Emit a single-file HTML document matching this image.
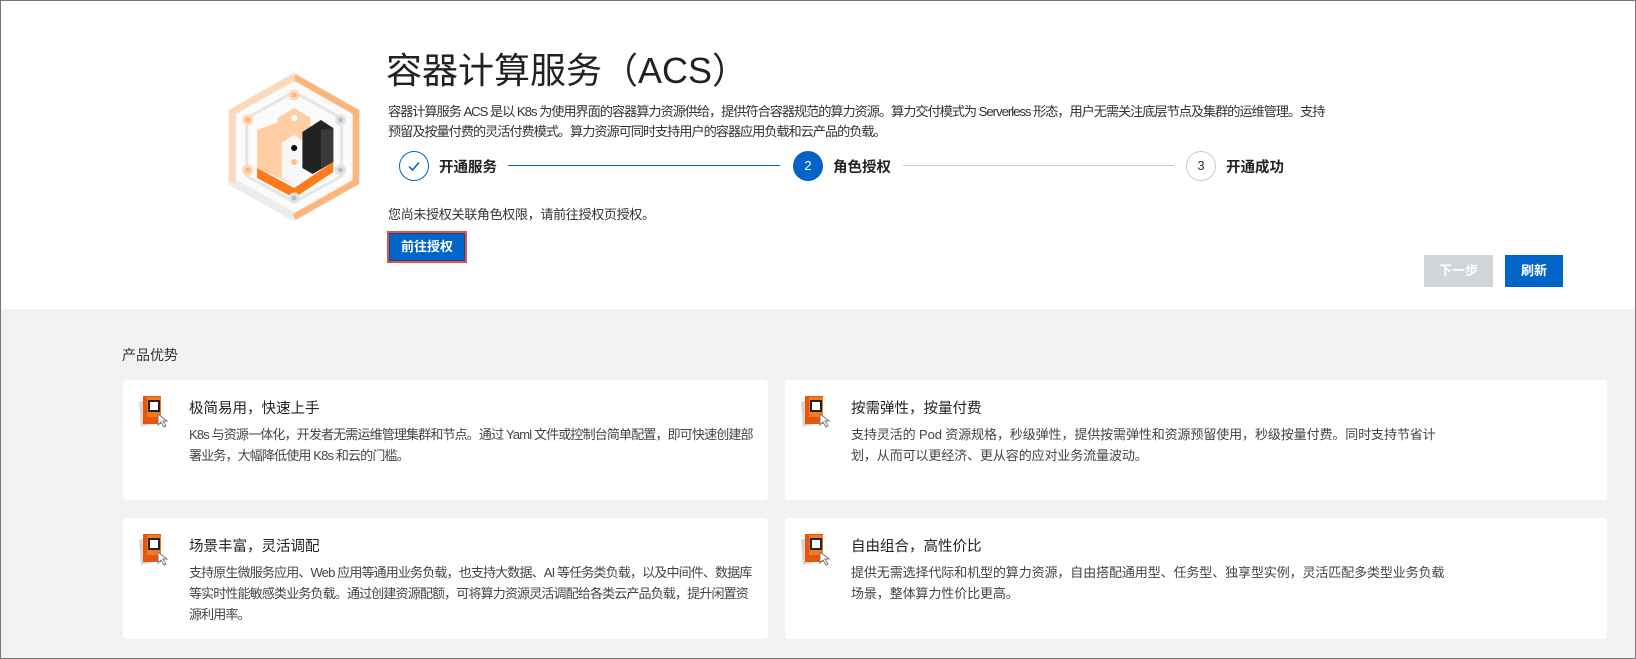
<!DOCTYPE html>
<html><head><meta charset="utf-8"><style>
*{margin:0;padding:0;box-sizing:border-box}
body{width:1636px;height:659px;overflow:hidden;font-family:"Liberation Sans","Noto Sans CJK SC",sans-serif;color:#333;background:#f2f2f2;position:relative}
.frame{position:absolute;inset:0;border:1px solid #777;pointer-events:none;z-index:9}
.top{position:absolute;left:0;top:0;width:1636px;height:309px;background:#fff}
.a{position:absolute;white-space:nowrap}
h1{position:absolute;left:386px;top:42px;font-size:36px;font-weight:400;color:#222;white-space:nowrap}
.desc{position:absolute;left:388px;top:102px;font-size:13.2px;line-height:20px;color:#333;white-space:nowrap;letter-spacing:-1.05px}
.circ{position:absolute;width:30px;height:30px;border-radius:50%;text-align:center;line-height:28px;font-size:13px}
.lbl{position:absolute;font-size:14.5px;font-weight:bold;color:#222;top:156px}
.line{position:absolute;height:1px;top:165px}
.btn{position:absolute;color:#fff;font-size:13px;font-weight:bold;text-align:center}
.card{position:absolute;background:#fff;border-radius:4px}
.card .t{position:absolute;left:66px;top:17px;font-size:14.5px;color:#222}
.card .d{position:absolute;left:66px;top:44px;font-size:13px;line-height:21px;color:#444;white-space:nowrap;letter-spacing:-0.85px}
.card svg{position:absolute;left:14px;top:14px}
</style></head><body>
<div class="frame"></div>
<div class="top"></div>
<svg class="a" style="left:222px;top:70px" width="160" height="155" viewBox="0 0 160 155">
<g transform="translate(-2,0) scale(1.03,1)">
<polygon points="72,7 132,42 132,112 72,147 12,112 12,42" fill="#fbfbfb" stroke="#ececec" stroke-width="8"/>
<polyline points="72,7 132,42 132,112 72,147" fill="none" stroke="#fcb477" stroke-width="6"/>
<polyline points="12,112 12,42 72,7" fill="none" stroke="#fdd9b8" stroke-width="6"/>
<polygon points="72,22 118,48 118,106 72,132 26,106 26,48" fill="none" stroke="#e6e6e6" stroke-width="3"/>
<polygon points="36,60 62,50 62,110 36,98" fill="#ffcfa3"/>
<polygon points="62,50 72,55 72,115 62,110" fill="#ffa85c"/>
<polygon points="56,48 72,38 88,48 88,65 72,75 56,65" fill="#ffcfa3"/>
<circle cx="72" cy="48" r="3" fill="#fff"/>
<polygon points="60,72 72,65 82,72 82,105 72,115 60,108" fill="#f7f7f7"/>
<circle cx="72" cy="78" r="3" fill="#111"/>
<circle cx="72" cy="92" r="3" fill="#ffc08a"/>
<polygon points="80,62 98,50 110,58 110,92 90,104 80,98" fill="#222"/>
<polygon points="98,60 110,58 110,92 98,98" fill="#3a3a3a"/>
<polygon points="36,98 72,118 110,92 110,102 72,128 36,108" fill="#ff7a1a"/>
<g fill="#ffb27a" stroke="#ffd9bd" stroke-width="3"><circle cx="72" cy="25" r="4"/><circle cx="27" cy="50" r="4"/><circle cx="27" cy="100" r="4"/></g>
<g fill="#bdbdbd" stroke="#e3e3e3" stroke-width="3"><circle cx="117" cy="50" r="4"/><circle cx="117" cy="100" r="4"/><circle cx="72" cy="128" r="4"/></g>
</g>
</svg>
<h1>容器计算服务（ACS）</h1>
<div class="desc">容器计算服务 ACS 是以 K8s 为使用界面的容器算力资源供给，提供符合容器规范的算力资源。算力交付模式为 Serverless 形态，用户无需关注底层节点及集群的运维管理。支持<br>预留及按量付费的灵活付费模式。算力资源可同时支持用户的容器应用负载和云产品的负载。</div>
<div class="circ" style="left:399px;top:151px;border:1px solid #0064c8"><svg width="28" height="28" viewBox="0 0 28 28"><path d="M9 14.5 L12.5 18 L19 10.5" fill="none" stroke="#0064c8" stroke-width="1.5"/></svg></div>
<div class="lbl" style="left:439px">开通服务</div>
<div class="line" style="left:508px;width:272px;background:#0064c8"></div>
<div class="circ" style="left:793px;top:151px;background:#0064c8;color:#fff;line-height:30px">2</div>
<div class="lbl" style="left:833px">角色授权</div>
<div class="line" style="left:903px;width:271px;background:#c8ccd2"></div>
<div class="circ" style="left:1186px;top:151px;border:1px solid #c8ccd2;color:#333">3</div>
<div class="lbl" style="left:1226px">开通成功</div>
<div class="a" style="left:388px;top:204px;font-size:13px;color:#333;letter-spacing:-0.3px">您尚未授权关联角色权限，请前往授权页授权。</div>
<div class="btn" style="left:387px;top:231px;width:80px;height:32px;border:2px solid #e8513f;background:#0064c8;line-height:27px;box-shadow:inset 0 0 0 1px #0050a0">前往授权</div>
<div class="btn" style="left:1424px;top:255px;width:69px;height:32px;background:#d1d5d9;line-height:32px">下一步</div>
<div class="btn" style="left:1505px;top:255px;width:58px;height:32px;background:#0064c8;line-height:32px">刷新</div>
<div class="a" style="left:122px;top:345px;font-size:14px;color:#333">产品优势</div>

<div class="card" style="left:123px;top:380px;width:645px;height:120px">
<svg width="32" height="36" viewBox="0 0 32 36"><polygon points="2,8 14,4 16,30 4,33" fill="#d6d6d6"/><rect x="6" y="2" width="18" height="28" fill="#e8560e"/><rect x="10" y="3" width="14" height="20" fill="#f47a1f"/><rect x="12" y="7" width="10" height="10" fill="#fff" stroke="#222" stroke-width="2"/><polygon points="21,20 21,31 24,28 27,33 29,32 26,27 30,27" fill="#fff" stroke="#777" stroke-width="1"/></svg>
<div class="t">极简易用，快速上手</div>
<div class="d">K8s 与资源一体化，开发者无需运维管理集群和节点。通过 Yaml 文件或控制台简单配置，即可快速创建部<br>署业务，大幅降低使用 K8s 和云的门槛。</div></div>

<div class="card" style="left:785px;top:380px;width:822px;height:120px">
<svg width="32" height="36" viewBox="0 0 32 36"><polygon points="2,8 14,4 16,30 4,33" fill="#d6d6d6"/><rect x="6" y="2" width="18" height="28" fill="#e8560e"/><rect x="10" y="3" width="14" height="20" fill="#f47a1f"/><rect x="12" y="7" width="10" height="10" fill="#fff" stroke="#222" stroke-width="2"/><polygon points="21,20 21,31 24,28 27,33 29,32 26,27 30,27" fill="#fff" stroke="#777" stroke-width="1"/></svg>
<div class="t">按需弹性，按量付费</div>
<div class="d" style="letter-spacing:-0.1px">支持灵活的 Pod 资源规格，秒级弹性，提供按需弹性和资源预留使用，秒级按量付费。同时支持节省计<br>划，从而可以更经济、更从容的应对业务流量波动。</div></div>

<div class="card" style="left:123px;top:518px;width:645px;height:121px">
<svg width="32" height="36" viewBox="0 0 32 36"><polygon points="2,8 14,4 16,30 4,33" fill="#d6d6d6"/><rect x="6" y="2" width="18" height="28" fill="#e8560e"/><rect x="10" y="3" width="14" height="20" fill="#f47a1f"/><rect x="12" y="7" width="10" height="10" fill="#fff" stroke="#222" stroke-width="2"/><polygon points="21,20 21,31 24,28 27,33 29,32 26,27 30,27" fill="#fff" stroke="#777" stroke-width="1"/></svg>
<div class="t">场景丰富，灵活调配</div>
<div class="d">支持原生微服务应用、Web 应用等通用业务负载，也支持大数据、AI 等任务类负载，以及中间件、数据库<br>等实时性能敏感类业务负载。通过创建资源配额，可将算力资源灵活调配给各类云产品负载，提升闲置资<br>源利用率。</div></div>

<div class="card" style="left:785px;top:518px;width:822px;height:121px">
<svg width="32" height="36" viewBox="0 0 32 36"><polygon points="2,8 14,4 16,30 4,33" fill="#d6d6d6"/><rect x="6" y="2" width="18" height="28" fill="#e8560e"/><rect x="10" y="3" width="14" height="20" fill="#f47a1f"/><rect x="12" y="7" width="10" height="10" fill="#fff" stroke="#222" stroke-width="2"/><polygon points="21,20 21,31 24,28 27,33 29,32 26,27 30,27" fill="#fff" stroke="#777" stroke-width="1"/></svg>
<div class="t">自由组合，高性价比</div>
<div class="d" style="letter-spacing:-0.1px">提供无需选择代际和机型的算力资源，自由搭配通用型、任务型、独享型实例，灵活匹配多类型业务负载<br>场景，整体算力性价比更高。</div></div>
</body></html>
